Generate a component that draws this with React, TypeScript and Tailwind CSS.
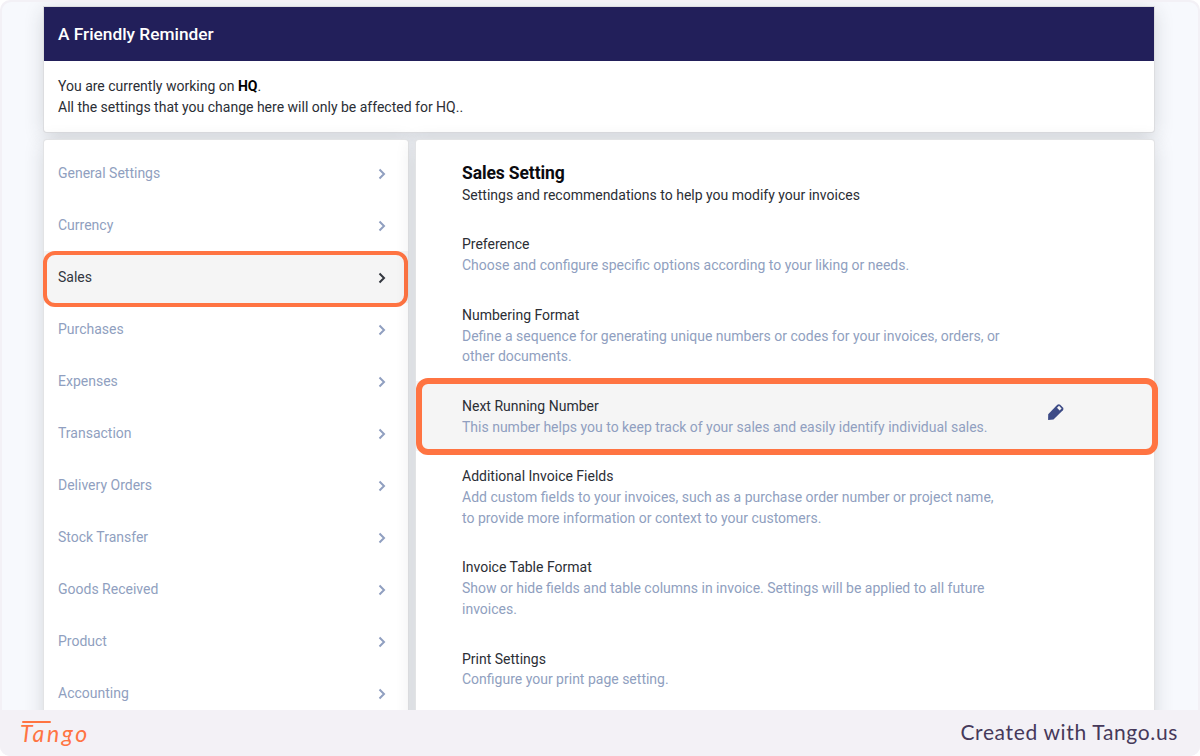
const MENU = [
  "General Settings",
  "Currency",
  "Sales",
  "Purchases",
  "Expenses",
  "Transaction",
  "Delivery Orders",
  "Stock Transfer",
  "Goods Received",
  "Product",
  "Accounting",
];

const SETTINGS = [
  {
    title: "Preference",
    lines: ["Choose and configure specific options according to your liking or needs."],
  },
  {
    title: "Numbering Format",
    lines: [
      "Define a sequence for generating unique numbers or codes for your invoices, orders, or",
      "other documents.",
    ],
  },
  {
    title: "Next Running Number",
    lines: ["This number helps you to keep track of your sales and easily identify individual sales."],
    active: true,
  },
  {
    title: "Additional Invoice Fields",
    lines: [
      "Add custom fields to your invoices, such as a purchase order number or project name,",
      "to provide more information or context to your customers.",
    ],
  },
  {
    title: "Invoice Table Format",
    lines: [
      "Show or hide fields and table columns in invoice. Settings will be applied to all future",
      "invoices.",
    ],
  },
  {
    title: "Print Settings",
    lines: ["Configure your print page setting."],
  },
];

function Chevron() {
  return (
    <svg className="mt-[2px] h-3 w-2" viewBox="0 0 8 12" fill="none" stroke="currentColor" strokeWidth="2">
      <path d="M1.5 1.5 6 6 1.5 10.5" />
    </svg>
  );
}

function Pencil() {
  return (
    <svg className="mt-[7px] h-[18px] w-[18px]" viewBox="0 0 18 18">
      <path
        d="M1.2 11.2 10.3 1.8Q11.8 .5 13.2 1.8L15.9 4.4Q17.2 5.8 15.9 7.2L6.5 16.4 1.1 17Z"
        fill="#3d4b86"
      />
      <path d="M12 2.8 14.6 5.4 12.6 7.4 10 4.8Z" fill="#f5f5f5" />
    </svg>
  );
}

function Sidebar() {
  return (
    <nav className="relative w-[364px] shrink-0 rounded-t-[3px] bg-white pt-[6.5px] shadow-[0_0_0_1px_#e2e3e5,0_4px_20px_rgba(40,42,48,0.18)]">
      {MENU.map((item) => (
        <div
          key={item}
          className={
            item === "Sales"
              ? "relative flex h-[52.1px] items-center justify-between bg-[#f5f5f5] pr-[22px] pl-[14px] text-[#33373f]"
              : "flex h-[52.1px] items-center justify-between pr-[22px] pl-[14px] text-[#909fc0]"
          }
        >
          <span className="pt-px">{item}</span>
          <Chevron />
          {item === "Sales" && (
            <span className="absolute top-[0.4px] right-0 -left-px h-[56px] rounded-[12px] border-4 border-[#ff7442]" />
          )}
        </div>
      ))}
    </nav>
  );
}

function SettingRow({ title, lines, active }: { title: string; lines: string[]; active?: boolean }) {
  return (
    <div
      className={
        active
          ? "relative flex items-start bg-[#f5f5f5] pt-[15px] pr-[89px] pb-[14px] pl-[46px]"
          : "flex items-start pt-[15px] pb-[14px] pl-[46px]"
      }
    >
      <div className="flex-1 leading-[20.7px] whitespace-nowrap">
        <p className="text-[#2b2e35]">{title}</p>
        {lines.map((line) => (
          <p key={line} className="text-[#909fc0]">
            {line}
          </p>
        ))}
      </div>
      {active && (
        <>
          <Pencil />
          <span className="absolute -top-[3px] -right-[4px] -bottom-[4px] left-0 rounded-[12px] border-6 border-[#ff7442]" />
        </>
      )}
    </div>
  );
}

export default function App() {
  return (
    <div className="h-[756px] w-[1200px] bg-white font-['Roboto',sans-serif] text-[14px]">
      <div className="flex h-full flex-col overflow-hidden rounded-[10px] bg-[#f3f1f6]">
        <main className="mx-[2px] mt-[2px] h-[708px] overflow-hidden rounded-t-[9px] bg-[#f7f9fd] pt-[5px] pr-[44px] pl-[42px]">
          <section className="h-[125px] rounded-b-[3px] bg-white shadow-[0_0_0_1px_#dcdde0,0_4px_20px_rgba(40,42,48,0.18)]">
            <h1 className="flex h-[54px] items-center bg-[#221f5a] pt-px pl-[14px] text-[17.3px] font-medium text-white">
              A Friendly Reminder
            </h1>
            <div className="pt-[15px] pl-[14px] leading-[21.2px] text-[#2b2e35]">
              <p>
                You are currently working on <b className="text-black">HQ</b>.
              </p>
              <p>All the settings that you change here will only be affected for HQ..</p>
            </div>
          </section>

          <div className="mt-[8px] flex h-[620px] gap-[8px]">
            <Sidebar />
            <section className="relative flex-1 rounded-t-[3px] bg-white shadow-[0_0_0_1px_#e2e3e5,0_4px_20px_rgba(40,42,48,0.18)]">
              <div className="h-[79.4px] pt-[21px] pl-[46px] text-[#2b2e35]">
                <h2 className="text-[17.5px] leading-[24px] font-bold tracking-[-0.12px] text-[#0b0b10]">
                  Sales Setting
                </h2>
                <p className="leading-[21px]">
                  Settings and recommendations to help you modify your invoices
                </p>
              </div>
              {SETTINGS.map((s) => (
                <SettingRow key={s.title} {...s} />
              ))}
            </section>
          </div>
        </main>

        <footer className="relative z-10 flex h-[46px] items-center justify-between bg-[#f3f1f6] pr-[22px] pl-[20px]">
          <div className="relative h-[30px] w-[72px] text-[#ff7442]">
            <span className="absolute top-[3px] left-[2px] h-[1.5px] w-[29px] rounded-full bg-[#ff7442]" />
            <span className="block font-['Lato',cursive] text-[23px] leading-[31px] tracking-[2.6px] italic">
              Tango
            </span>
          </div>
          <span className="pb-[2px] font-['Lato',sans-serif] text-[21px] tracking-[0.65px] text-[#46395a]">
            Created with Tango.us
          </span>
        </footer>
      </div>
    </div>
  );
}
